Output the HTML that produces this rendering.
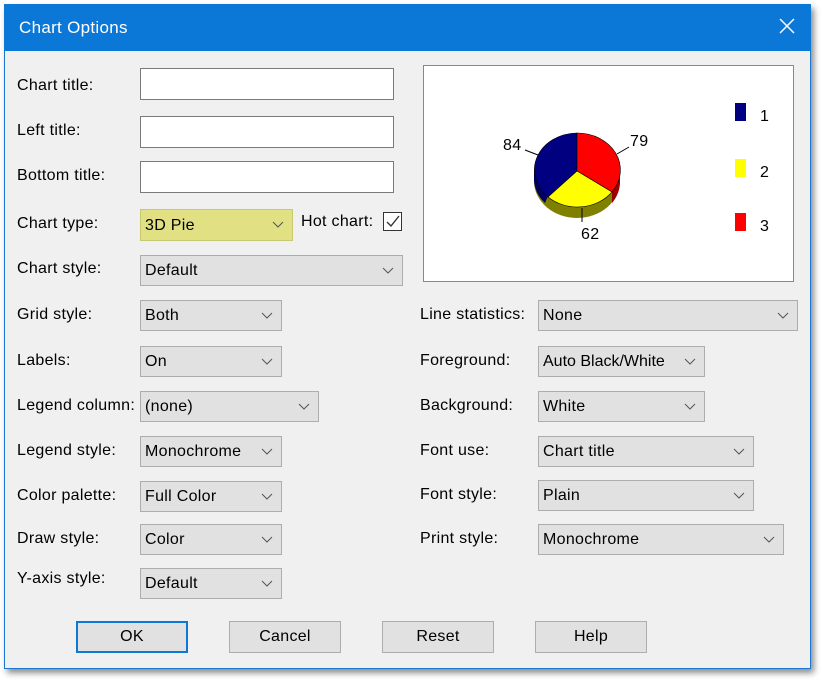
<!DOCTYPE html>
<html><head><meta charset="utf-8"><style>
*{box-sizing:border-box}
body{margin:0;width:822px;height:682px;background:#fff;font-family:"Liberation Sans",sans-serif;font-size:16px;letter-spacing:0.3px;color:#000;position:relative;overflow:hidden}
.win{position:absolute;left:4px;top:4px;width:807px;height:665px;background:#f0f0f0;border:1px solid #1a78d4;box-shadow:3px 4px 6px rgba(0,0,0,.45)}
.tb{position:absolute;left:4px;top:4px;width:807px;height:47px;background:#0b77d7;color:#fff;font-size:17px}
.tb span{position:absolute;left:15px;top:14px}
.x{position:absolute;right:16px;top:14px}
.l{position:absolute;white-space:nowrap}
.in{position:absolute;background:#fff;border:1px solid #7a7a7a}
.dd{position:absolute;background:#e1e1e1;border:1px solid #adadad;padding:6px 0 0 4px;white-space:nowrap}
.dd svg{position:absolute;right:8px;top:11px}
.bt{position:absolute;background:#e1e1e1;border:1px solid #adadad;text-align:center;padding-top:6px;height:32px;width:112px}
</style></head><body>
<div class="win"></div>
<div class="tb"><span>Chart Options</span>
<svg class="x" width="16" height="16"><path d="M1 1L15 15M15 1L1 15" stroke="#fff" stroke-width="1.5"/></svg></div>

<div class="l" style="left:17px;top:77px">Chart title:</div>
<div class="l" style="left:17px;top:122px">Left title:</div>
<div class="l" style="left:17px;top:167px">Bottom title:</div>
<div class="l" style="left:17px;top:215px">Chart type:</div>
<div class="l" style="left:17px;top:260px">Chart style:</div>
<div class="l" style="left:17px;top:306px">Grid style:</div>
<div class="l" style="left:17px;top:352px">Labels:</div>
<div class="l" style="left:17px;top:397px">Legend column:</div>
<div class="l" style="left:17px;top:442px">Legend style:</div>
<div class="l" style="left:17px;top:487px">Color palette:</div>
<div class="l" style="left:17px;top:530px">Draw style:</div>
<div class="l" style="left:17px;top:570px">Y-axis style:</div>

<div class="in" style="left:140px;top:68px;width:254px;height:32px"></div>
<div class="in" style="left:140px;top:116px;width:254px;height:32px"></div>
<div class="in" style="left:140px;top:161px;width:254px;height:32px"></div>

<div class="dd" style="left:140px;top:209px;width:153px;height:32px;background:#e1e184;border-color:#c8c870;padding-top:7px">3D Pie<svg width="12" height="8"><path d="M1 1L6 6L11 1" fill="none" stroke="#555"/></svg></div>
<div class="l" style="left:301px;top:213px">Hot chart:</div>
<div style="position:absolute;left:383px;top:212px;width:19px;height:19px;border:1px solid #333;background:#fff"><svg width="17" height="17"><path d="M3 9L7 13L15 3" fill="none" stroke="#333" stroke-width="1.4"/></svg></div>

<div class="dd" style="left:140px;top:255px;width:263px;height:31px">Default<svg width="12" height="8"><path d="M1 1L6 6L11 1" fill="none" stroke="#555"/></svg></div>
<div class="dd" style="left:140px;top:300px;width:142px;height:31px">Both<svg width="12" height="8"><path d="M1 1L6 6L11 1" fill="none" stroke="#555"/></svg></div>
<div class="dd" style="left:140px;top:346px;width:142px;height:31px">On<svg width="12" height="8"><path d="M1 1L6 6L11 1" fill="none" stroke="#555"/></svg></div>
<div class="dd" style="left:140px;top:391px;width:179px;height:31px">(none)<svg width="12" height="8"><path d="M1 1L6 6L11 1" fill="none" stroke="#555"/></svg></div>
<div class="dd" style="left:140px;top:436px;width:142px;height:31px">Monochrome<svg width="12" height="8"><path d="M1 1L6 6L11 1" fill="none" stroke="#555"/></svg></div>
<div class="dd" style="left:140px;top:481px;width:142px;height:31px">Full Color<svg width="12" height="8"><path d="M1 1L6 6L11 1" fill="none" stroke="#555"/></svg></div>
<div class="dd" style="left:140px;top:524px;width:142px;height:31px">Color<svg width="12" height="8"><path d="M1 1L6 6L11 1" fill="none" stroke="#555"/></svg></div>
<div class="dd" style="left:140px;top:568px;width:142px;height:31px">Default<svg width="12" height="8"><path d="M1 1L6 6L11 1" fill="none" stroke="#555"/></svg></div>

<div class="l" style="left:420px;top:306px">Line statistics:</div>
<div class="l" style="left:420px;top:352px">Foreground:</div>
<div class="l" style="left:420px;top:397px">Background:</div>
<div class="l" style="left:420px;top:442px">Font use:</div>
<div class="l" style="left:420px;top:486px">Font style:</div>
<div class="l" style="left:420px;top:530px">Print style:</div>

<div class="dd" style="left:538px;top:300px;width:260px;height:31px">None<svg width="12" height="8"><path d="M1 1L6 6L11 1" fill="none" stroke="#555"/></svg></div>
<div class="dd" style="left:538px;top:346px;width:167px;height:31px;letter-spacing:0">Auto Black/White<svg width="12" height="8"><path d="M1 1L6 6L11 1" fill="none" stroke="#555"/></svg></div>
<div class="dd" style="left:538px;top:391px;width:167px;height:31px">White<svg width="12" height="8"><path d="M1 1L6 6L11 1" fill="none" stroke="#555"/></svg></div>
<div class="dd" style="left:538px;top:436px;width:216px;height:31px">Chart title<svg width="12" height="8"><path d="M1 1L6 6L11 1" fill="none" stroke="#555"/></svg></div>
<div class="dd" style="left:538px;top:480px;width:216px;height:31px">Plain<svg width="12" height="8"><path d="M1 1L6 6L11 1" fill="none" stroke="#555"/></svg></div>
<div class="dd" style="left:538px;top:524px;width:246px;height:31px">Monochrome<svg width="12" height="8"><path d="M1 1L6 6L11 1" fill="none" stroke="#555"/></svg></div>

<svg style="position:absolute;left:423px;top:65px" width="371" height="217">
<rect x="0.5" y="0.5" width="370" height="216" fill="#fff" stroke="#888"/>
<g transform="translate(-423,-65)">
<path d="M534 170 L534 181 A43 37 0 0 0 620 181 L620 170 Z" fill="#808000"/>
<path d="M534 170 L534 181 A43 37 0 0 0 545 203 L548 196 Z" fill="#000060"/>
<path d="M612 192 L612 203 A43 37 0 0 0 620 181 L620 170 Z" fill="#900"/>
<path d="M577 171 L577 133 A43 37 0 0 0 548 197 Z" fill="#000080" stroke="#000" stroke-width=".6"/>
<path d="M577 171 L577 133 A43 37 0 0 1 612 192 Z" fill="#f00" stroke="#000" stroke-width=".6"/>
<path d="M577 171 L548 197 A43 37 0 0 0 612 192 Z" fill="#ff0" stroke="#000" stroke-width=".6"/>
<path d="M525 150 L538 155 M629 147 L617 154 M582 208 L582 222" stroke="#000"/>
<g font-size="16" font-family="Liberation Sans,sans-serif">
<text x="503" y="150">84</text><text x="630" y="146">79</text><text x="581" y="239">62</text>
<text x="760" y="121">1</text><text x="760" y="177">2</text><text x="760" y="231">3</text></g>
<rect x="735" y="103" width="11" height="18" fill="#000080"/>
<rect x="735" y="159" width="11" height="18" fill="#ff0"/>
<rect x="735" y="213" width="11" height="18" fill="#f00"/>
</g></svg>

<div class="bt" style="left:76px;top:621px;border:2px solid #0b77d7;padding-top:5px">OK</div>
<div class="bt" style="left:229px;top:621px">Cancel</div>
<div class="bt" style="left:382px;top:621px">Reset</div>
<div class="bt" style="left:535px;top:621px">Help</div>
</body></html>
